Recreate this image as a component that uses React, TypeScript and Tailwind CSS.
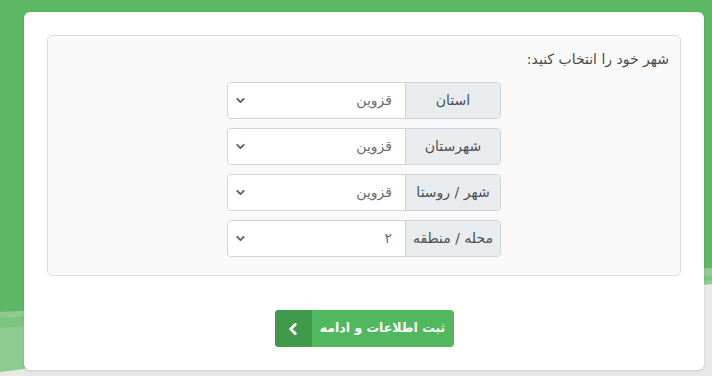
import { ChevronDown, ChevronLeft } from "lucide-react";

const rows = [
  { label: "استان", value: "قزوین" },
  { label: "شهرستان", value: "قزوین" },
  { label: "شهر / روستا", value: "قزوین" },
  { label: "محله / منطقه", value: "۲" },
];

function Backdrop() {
  return (
    <svg
      className="absolute inset-0 h-full w-full"
      viewBox="0 0 712 376"
      preserveAspectRatio="none"
    >
      <rect width="712" height="376" fill="#e8e8e8" />
      <path d="M0 0 H712 V284 C520 300 260 340 0 372 Z" fill="#8dcb90" />
      <path d="M0 0 H712 V268 C520 278 260 300 0 312 Z" fill="#5cb865" />
      <path d="M0 318 C260 300 520 286 712 276 V280 C520 290 260 306 0 328 Z" fill="#7cc480" />
    </svg>
  );
}

export default function App() {
  return (
    <div
      dir="rtl"
      className="relative h-[376px] w-[712px] overflow-hidden"
      style={{ fontFamily: '"DejaVu Sans", "Noto Sans", sans-serif' }}
    >
      <Backdrop />
      <div className="relative flex justify-end pl-[24px] pr-[8px] pt-[12px]">
        <div className="w-[680px] rounded-[6px] bg-white p-[23px] shadow-[0_1px_3px_rgba(0,0,0,0.12)]">
          <div className="rounded-[5px] border border-[#dcdcdc] bg-[#f9f9f9] px-[11px] pb-[18px] pt-[13px]">
            <div className="text-[14px] leading-[20px] text-[#4a4a4a]">
              شهر خود را انتخاب کنید:
            </div>
            <div className="mt-[13px] flex flex-col items-center gap-[9px]">
              {rows.map((r) => (
                <div
                  key={r.label}
                  className="flex h-[37px] w-[274px] overflow-hidden rounded-[4px] border border-[#ced4da]"
                >
                  <div className="flex w-[95px] shrink-0 items-center justify-center border-l border-[#ced4da] bg-[#e9ecef] text-[14px] text-[#495057]">
                    {r.label}
                  </div>
                  <div className="flex flex-1 items-center justify-between bg-white pl-[6px] pr-[13px] text-[14px] text-[#6c6c6c]">
                    <span>{r.value}</span>
                    <ChevronDown className="h-[13px] w-[13px] text-[#5a6470]" strokeWidth={3.5} />
                  </div>
                </div>
              ))}
            </div>
          </div>
          <div className="mt-[34px] flex justify-center">
            <button className="flex h-[37px] w-[179px] overflow-hidden rounded-[4px] bg-[#52b85f] text-white">
              <span className="flex flex-1 items-center justify-center whitespace-nowrap text-[12.5px] font-bold">
                ثبت اطلاعات و ادامه
              </span>
              <span className="flex w-[37px] items-center justify-center bg-[#3f9a4c]">
                <ChevronLeft className="h-[18px] w-[18px]" strokeWidth={4} />
              </span>
            </button>
          </div>
        </div>
      </div>
    </div>
  );
}
